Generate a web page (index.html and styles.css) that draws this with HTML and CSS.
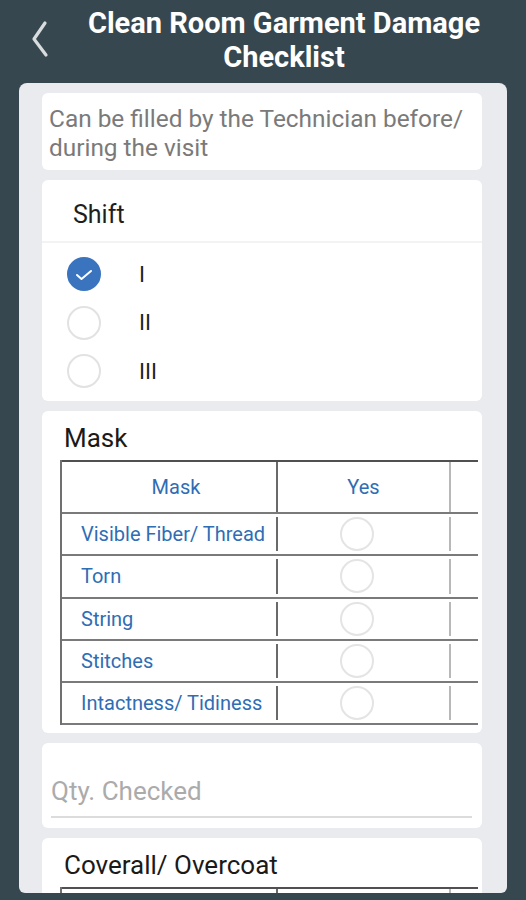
FILE: index.html
```html
<!DOCTYPE html>
<html>
<head>
<meta charset="utf-8">
<link rel="stylesheet" href="styles.css">
</head>
<body>
<header class="topbar">
  <div class="back">
    <svg width="24" height="40" viewBox="0 0 24 40"><path d="M15 3 L4 19 L16 35" fill="none" stroke="#d9dcde" stroke-width="3.2" stroke-linecap="round" stroke-linejoin="round"/></svg>
  </div>
  <h1 class="title">Clean Room Garment Damage Checklist</h1>
</header>
<main class="panel">
  <section class="card note">Can be filled by the Technician before/ during the visit</section>

  <section class="card shift">
    <div class="shift-head">Shift</div>
    <div class="radios">
      <div class="radio-row"><span class="radio checked"><svg width="34" height="34" viewBox="0 0 34 34"><path d="M10 18 L14.5 22 L24 14" fill="none" stroke="#fff" stroke-width="2" stroke-linecap="round" stroke-linejoin="round"/></svg></span><span class="rlabel">I</span></div>
      <div class="radio-row"><span class="radio"></span><span class="rlabel">II</span></div>
      <div class="radio-row"><span class="radio"></span><span class="rlabel">III</span></div>
    </div>
  </section>

  <section class="card group">
    <div class="group-title">Mask</div>
    <div class="table-wrap">
      <div class="table">
        <div class="trow head">
          <div class="cell c1 hc1">Mask</div>
          <div class="cell c2">Yes</div>
          <div class="cell c3"></div>
        </div>
        <div class="trow"><div class="cell c1 lbl">Visible Fiber/ Thread</div><div class="cell c2"><span class="sradio"></span></div><div class="cell c3"></div></div>
        <div class="trow"><div class="cell c1 lbl">Torn</div><div class="cell c2"><span class="sradio"></span></div><div class="cell c3"></div></div>
        <div class="trow"><div class="cell c1 lbl">String</div><div class="cell c2"><span class="sradio"></span></div><div class="cell c3"></div></div>
        <div class="trow"><div class="cell c1 lbl">Stitches</div><div class="cell c2"><span class="sradio"></span></div><div class="cell c3"></div></div>
        <div class="trow"><div class="cell c1 lbl">Intactness/ Tidiness</div><div class="cell c2"><span class="sradio"></span></div><div class="cell c3"></div></div>
      </div>
    </div>
  </section>

  <section class="card qty">
    <div class="input">Qty. Checked</div>
  </section>

  <section class="card group">
    <div class="group-title">Coverall/ Overcoat</div>
    <div class="table-wrap">
      <div class="table">
        <div class="trow head">
          <div class="cell c1"></div>
          <div class="cell c2"></div>
          <div class="cell c3"></div>
        </div>
      </div>
    </div>
  </section>
</main>
</body>
</html>
```

FILE: styles.css
```css
* { box-sizing: border-box; }
html, body { margin: 0; padding: 0; }
body {
  width: 526px;
  height: 900px;
  overflow: hidden;
  background: #37474f;
  font-family: Roboto, "Liberation Sans", sans-serif;
}
.topbar {
  height: 83px;
  display: flex;
  align-items: flex-start;
}
.back {
  width: 70px;
  padding: 20px 0 0 30px;
}
.back svg { display: block; }
.title {
  margin: 6px 0 0 0;
  width: 428px;
  text-align: center;
  color: #ffffff;
  font-size: 29px;
  font-weight: 700;
  line-height: 34px;
}
.panel {
  margin: 0 19px;
  height: 810px;
  overflow: hidden;
  background: #e9ebee;
  border-radius: 8px 8px 6px 6px;
  padding: 10px 25px 0 23px;
  display: flex;
  flex-direction: column;
  gap: 10px;
}
.card {
  background: #ffffff;
  border-radius: 6px;
  flex-shrink: 0;
}
.note {
  padding: 11px 8px 8px 7px;
  color: #7a7a7a;
  font-size: 24.4px;
  line-height: 29px;
}
.shift { padding-bottom: 13px; }
.shift-head {
  height: 63px;
  padding: 20px 0 0 31px;
  font-size: 25px;
  line-height: 30px;
  color: #1e1e1e;
  border-bottom: 2px solid #f2f3f4;
}
.radios {
  padding: 14px 0 0 25px;
  display: flex;
  flex-direction: column;
  gap: 14.5px;
}
.radio-row {
  display: flex;
  align-items: center;
  height: 34px;
}
.radio {
  width: 34px;
  height: 34px;
  border-radius: 50%;
  border: 2px solid #e2e2e2;
  display: flex;
  align-items: center;
  justify-content: center;
}
.radio.checked {
  background: #3a74bf;
  border-color: #3a74bf;
}
.radio svg { flex-shrink: 0; }
.rlabel {
  margin-left: 38px;
  font-size: 22px;
  color: #1e1e1e;
}
.group { padding: 0 4px 8px 18px; }
.group-title {
  padding: 12px 0 0 4px;
  height: 49px;
  font-size: 26px;
  line-height: 30px;
  color: #1a1a1a;
}
.table-wrap {
  overflow: hidden;
  width: 418px;
}
.table {
  width: 560px;
  border-left: 2px solid #707070;
}
.trow {
  display: grid;
  grid-template-columns: 216px 173px 170px;
  height: 42.3px;
  border-bottom: 2px solid #7a7a7a;
}
.trow.head {
  height: 54px;
  border-top: 2px solid #505050;
  border-bottom: 2px solid #7a7a7a;
}
.cell {
  display: flex;
  align-items: center;
  justify-content: center;
  color: #2f6db4;
  font-size: 20px;
  border-right: 2px solid #6a6a6a;
  margin: 3px 0;
}
.trow.head .cell { margin: 0; }
.cell.hc1 { padding-left: 14px; }
.cell.c2 { border-right-color: #b8b8b8; }
.cell.lbl {
  justify-content: flex-start;
  padding-left: 19px;
  white-space: nowrap;
}
.sradio {
  width: 34px;
  height: 34px;
  border-radius: 50%;
  border: 2px solid #e4e4e4;
  margin-left: -14px;
}
.qty { padding: 33px 10px 10px 9px; }
.input {
  height: 42px;
  font-size: 26px;
  line-height: 30px;
  color: #ababab;
  border-bottom: 2px solid #dcdcdc;
}
```
